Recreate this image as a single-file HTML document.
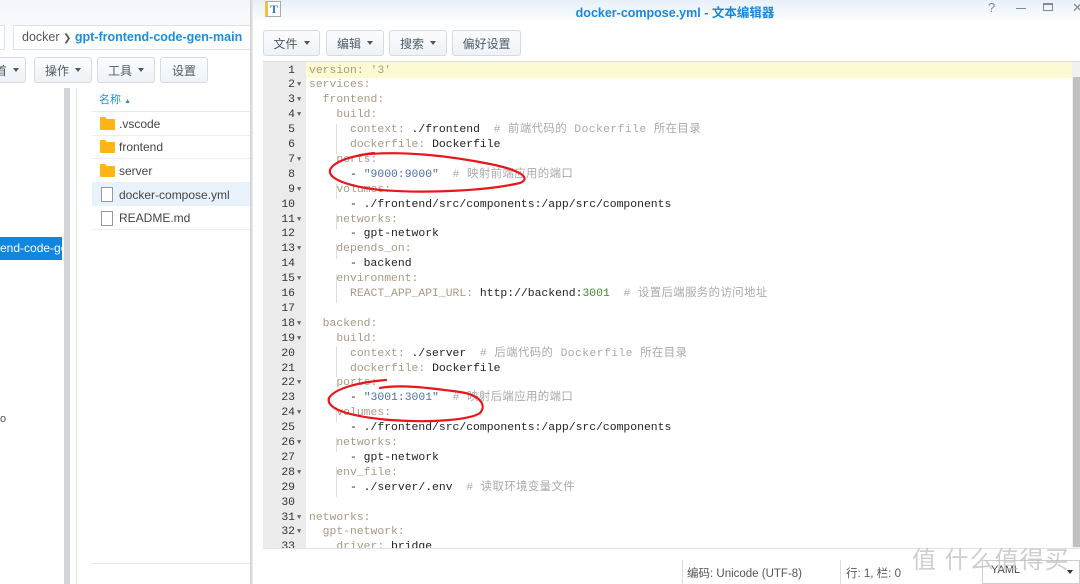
<!DOCTYPE html>
<html><head><meta charset="utf-8"><style>
*{margin:0;padding:0;box-sizing:border-box}
body{width:1080px;height:584px;overflow:hidden;background:#fff;font-family:"Liberation Sans","Noto Sans CJK SC",sans-serif;position:relative;font-size:12px;color:#333}
.abs{position:absolute}
.btn{position:absolute;height:26px;border:1px solid #d4dbe3;border-radius:3px;background:linear-gradient(#fbfcfd,#eef2f6);font-size:12px;color:#505a64;display:flex;align-items:center;justify-content:center}
.caret{display:inline-block;width:0;height:0;border-left:3px solid transparent;border-right:3px solid transparent;border-top:4px solid #555;margin-left:6px}
.row{position:absolute;left:92px;width:160px;height:23px;font-size:12px;color:#444;display:flex;align-items:center;padding-left:8px}
.fold{width:15px;height:11px;background:#fdb515;border-radius:1px;margin-right:4px;position:relative}
.fold:before{content:"";position:absolute;left:0;top:-2px;width:6px;height:3px;background:#fdb515;border-radius:1px 1px 0 0}
.file{width:12px;height:15px;border:1px solid #999;background:#fff;margin-right:6px;margin-left:1px}
#code{position:absolute;left:263px;top:62px;width:809px;height:486px;overflow:hidden;background:#fff;font-family:"Liberation Mono","Noto Sans CJK SC",monospace;font-size:11.4px}
#gut{position:absolute;left:0;top:0;width:43px;height:100%;background:#ebebeb}
.l{position:absolute;left:0;height:15px;line-height:15px;white-space:pre;width:809px}
.n{position:absolute;left:0;width:32px;text-align:right;color:#333}
.a{position:absolute;left:34px;color:#666;font-size:7px}
.t{position:absolute;left:46px}
.k{color:#a89a85}.v{color:#222}.c{color:#aaa;font-family:"Liberation Mono","Noto Sans CJK SC",monospace;letter-spacing:0.4px}.s{color:#4f6fa8}.g{color:#3c8d2c}
.ig{position:absolute;width:1px;background:#ddd}
</style></head><body>
<div class="abs" style="left:0;top:0;width:252px;height:584px;background:#fff"></div>
<div class="abs" style="left:0;top:0;width:252px;height:56px;background:linear-gradient(#f3f6fa,#fff)"></div>
<div class="abs" style="left:-5px;top:25px;width:10px;height:25px;border:1px solid #dde2e8;background:#fff"></div>
<div class="abs" style="left:13px;top:25px;width:245px;height:25px;border:1px solid #dde2e8;background:#fff;font-size:12.5px;line-height:23px;padding-left:8px;color:#555;white-space:nowrap">docker <span style="color:#555;font-size:10px">&#x276F;</span> <b style="color:#1a8fdc;font-weight:bold">gpt-frontend-code-gen-main</b></div>
<div class="btn" style="left:-10px;top:57px;width:36px;justify-content:flex-end;padding-right:6px">首<span class="caret"></span></div>
<div class="btn" style="left:34px;top:57px;width:58px">操作<span class="caret"></span></div>
<div class="btn" style="left:97px;top:57px;width:58px">工具<span class="caret"></span></div>
<div class="btn" style="left:160px;top:57px;width:48px">设置</div>
<div class="abs" style="left:64px;top:88px;width:6px;height:496px;background:#d2d4d7"></div>
<div class="abs" style="left:76px;top:88px;width:1px;height:496px;background:#e4e6e8"></div>
<div class="abs" style="left:0;top:237px;width:62px;height:23px;background:#0f86e0;color:#fff;font-size:12px;line-height:23px;white-space:nowrap;overflow:hidden">end-code-gen</div>
<div class="abs" style="left:0;top:413px;font-size:11px;color:#555">o</div>
<div class="abs" style="left:92px;top:88px;width:160px;height:24px;border-bottom:1px solid #e8eaec;font-size:11px;color:#2d8fdc;line-height:24px;padding-left:7px">名称 <span style="font-size:7px">▲</span></div>
<div class="row" style="top:113px;border-bottom:1px solid #eee"><span class="fold"></span>.vscode</div>
<div class="row" style="top:136px;border-bottom:1px solid #eee"><span class="fold"></span>frontend</div>
<div class="row" style="top:160px;border-bottom:1px solid #eee"><span class="fold"></span>server</div>
<div class="row" style="top:183px;background:#e8f2fb"><span class="file"></span>docker-compose.yml</div>
<div class="row" style="top:207px;border-bottom:1px solid #eee"><span class="file"></span>README.md</div>
<div class="abs" style="left:92px;top:563px;width:160px;height:1px;background:#e8e8e8"></div>
<div class="abs" style="left:250px;top:0;width:3px;height:584px;background:linear-gradient(90deg,#ccc,#eee)"></div>
<div class="abs" style="left:253px;top:0;width:827px;height:584px;background:#fff"></div>
<div class="abs" style="left:253px;top:0;width:827px;height:24px;background:linear-gradient(#e6f0fa,#fff)"></div>
<div class="abs" style="left:265px;top:1px;width:16px;height:16px;background:#fff;border:1px solid #aaa;border-left:3px solid #f0c040;font:bold 12px 'Liberation Serif',serif;color:#2f79c9;line-height:14px;text-align:center">T</div>
<div class="abs" style="left:0;top:2px;width:1350px;text-align:center;font-size:12.5px;font-weight:bold;color:#1a86dc">docker-compose.yml - 文本编辑器</div>
<div class="abs" style="left:988px;top:0;font-size:13px;color:#888">?</div>
<div class="abs" style="left:1016px;top:8px;width:10px;height:1px;background:#888"></div>
<div class="abs" style="left:1043px;top:3px;width:10px;height:8px;border:1px solid #888;border-top-width:2px"></div>
<div class="abs" style="left:1072px;top:0;font-size:13px;color:#888">✕</div>
<div class="btn" style="left:263px;top:30px;width:57px">文件<span class="caret"></span></div>
<div class="btn" style="left:326px;top:30px;width:58px">编辑<span class="caret"></span></div>
<div class="btn" style="left:389px;top:30px;width:58px">搜索<span class="caret"></span></div>
<div class="btn" style="left:452px;top:30px;width:69px">偏好设置</div>
<div class="abs" style="left:263px;top:61px;width:817px;height:1px;background:#ddd"></div>
<div id="code"><div id="gut"></div>
<div class="abs" style="left:43px;top:0;width:766px;height:16px;background:#fdf9d2"></div>
<div class="ig" style="left:73px;top:62px;height:30px"></div>
<div class="ig" style="left:73px;top:122px;height:15px"></div>
<div class="ig" style="left:73px;top:152px;height:15px"></div>
<div class="ig" style="left:73px;top:182px;height:15px"></div>
<div class="ig" style="left:73px;top:212px;height:15px"></div>
<div class="ig" style="left:73px;top:226px;height:15px"></div>
<div class="ig" style="left:73px;top:285px;height:30px"></div>
<div class="ig" style="left:73px;top:345px;height:15px"></div>
<div class="ig" style="left:73px;top:375px;height:15px"></div>
<div class="ig" style="left:73px;top:405px;height:15px"></div>
<div class="ig" style="left:73px;top:420px;height:15px"></div>
</div>
<div class="abs" style="left:263px;top:548px;width:817px;height:1px;background:#dde3ea"></div>
<div class="abs" style="left:1072px;top:62px;width:8px;height:486px;background:#f1f1f1"></div>
<div class="abs" style="left:1073px;top:77px;width:7px;height:470px;background:#c1c1c1"></div>
<div class="abs" style="left:682px;top:560px;width:1px;height:24px;background:#ddd"></div>
<div class="abs" style="left:687px;top:565px;font-size:11.5px;color:#555">编码: Unicode (UTF-8)</div>
<div class="abs" style="left:840px;top:560px;width:1px;height:24px;background:#ddd"></div>
<div class="abs" style="left:846px;top:565px;font-size:11.5px;color:#555">行: 1, 栏: 0</div>
<div class="abs" style="left:982px;top:560px;width:98px;height:24px;border:1px solid #ccc;font-size:11px;color:#444;padding:3px 0 0 8px">YAML<span class="caret" style="position:absolute;right:6px;top:9px;border-top-color:#333"></span></div>
<div class="abs" style="left:912px;top:540px;font-size:24px;color:rgba(190,190,190,0.75);letter-spacing:1px">值 什么值得买</div>
<svg class="abs" style="left:0;top:0" width="1080" height="584"><g fill="none" stroke="#e8161b" stroke-width="2.2" stroke-linecap="round">
<path d="M374 153 C350 156 333 162 330 170 C328 178 345 186 380 190 C430 194 490 190 520 183 C532 178 520 170 490 164 C450 156 400 150 360 155"/>
<path d="M386 380 C360 382 335 388 329 398 C326 408 345 416 390 420 C430 423 470 420 480 413 C487 405 480 395 460 392 C430 388 400 384 380 388"/>
</g></svg>
<script>
var L=[
[0,'<span class="k">version:</span> <span class="k">\'3\'</span>',0],
[0,'<span class="k">services:</span>',1],
[2,'<span class="k">frontend:</span>',1],
[4,'<span class="k">build:</span>',1],
[6,'<span class="k">context:</span> <span class="v">./frontend</span>  <span class="c"># 前端代码的 Dockerfile 所在目录</span>',0],
[6,'<span class="k">dockerfile:</span> <span class="v">Dockerfile</span>',0],
[4,'<span class="k">ports:</span>',1],
[6,'<span class="v">-</span> <span class="s">"9000:9000"</span>  <span class="c"># 映射前端应用的端口</span>',0],
[4,'<span class="k">volumes:</span>',1],
[6,'<span class="v">- ./frontend/src/components:/app/src/components</span>',0],
[4,'<span class="k">networks:</span>',1],
[6,'<span class="v">- gpt-network</span>',0],
[4,'<span class="k">depends_on:</span>',1],
[6,'<span class="v">- backend</span>',0],
[4,'<span class="k">environment:</span>',1],
[6,'<span class="k">REACT_APP_API_URL:</span> <span class="v">http://backend:</span><span class="g">3001</span>  <span class="c"># 设置后端服务的访问地址</span>',0],
[0,'',0],
[2,'<span class="k">backend:</span>',1],
[4,'<span class="k">build:</span>',1],
[6,'<span class="k">context:</span> <span class="v">./server</span>  <span class="c"># 后端代码的 Dockerfile 所在目录</span>',0],
[6,'<span class="k">dockerfile:</span> <span class="v">Dockerfile</span>',0],
[4,'<span class="k">ports:</span>',1],
[6,'<span class="v">-</span> <span class="s">"3001:3001"</span>  <span class="c"># 映射后端应用的端口</span>',0],
[4,'<span class="k">volumes:</span>',1],
[6,'<span class="v">- ./frontend/src/components:/app/src/components</span>',0],
[4,'<span class="k">networks:</span>',1],
[6,'<span class="v">- gpt-network</span>',0],
[4,'<span class="k">env_file:</span>',1],
[6,'<span class="v">- ./server/.env</span>  <span class="c"># 读取环境变量文件</span>',0],
[0,'',0],
[0,'<span class="k">networks:</span>',1],
[2,'<span class="k">gpt-network:</span>',1],
[4,'<span class="k">driver:</span> <span class="v">bridge</span>',0]];
var c=document.getElementById('code'),h='';
for(var i=0;i<L.length;i++){h+='<div class="l" style="top:'+(i*14.9+1.5)+'px"><span class="n">'+(i+1)+'</span>'+(L[i][2]?'<span class="a">▼</span>':'')+'<span class="t">'+'      '.slice(0,L[i][0])+L[i][1]+'</span></div>';}
c.insertAdjacentHTML('beforeend',h);
</script>
</body></html>
